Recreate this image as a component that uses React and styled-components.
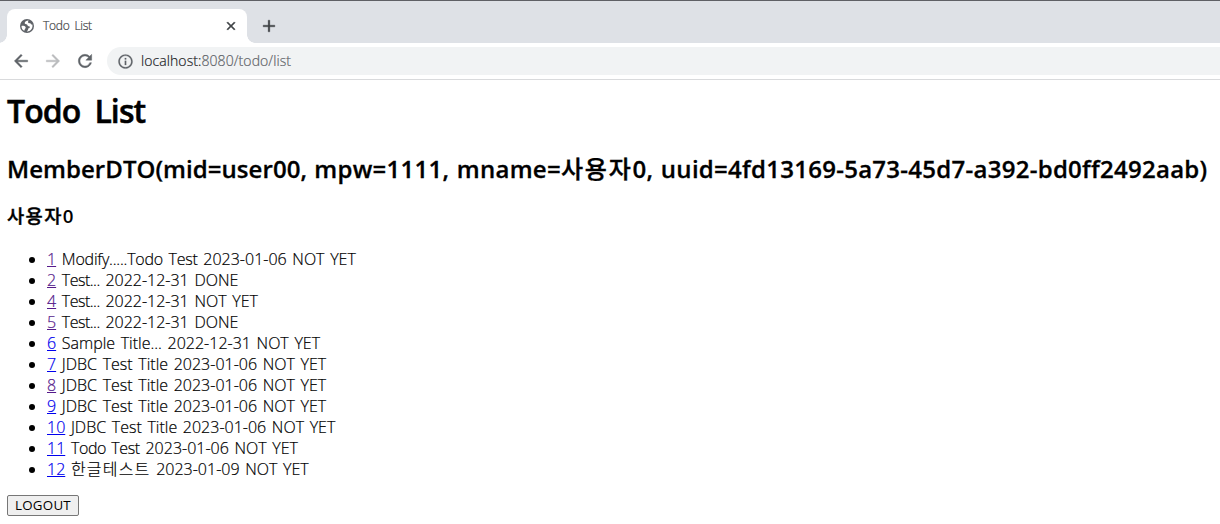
import React from 'react'
import styled, { createGlobalStyle } from 'styled-components'
import { MdArrowBack, MdArrowForward, MdRefresh, MdInfoOutline, MdClose, MdAdd } from 'react-icons/md'

const todos = [
    { tno: 1, title: 'Modify.....Todo Test', dueDate: '2023-01-06', finished: false, visited: true, tracking: -0.2 },
    { tno: 2, title: 'Test...', dueDate: '2022-12-31', finished: true, visited: true, tracking: -0.5 },
    { tno: 4, title: 'Test...', dueDate: '2022-12-31', finished: false, visited: true, tracking: -0.5 },
    { tno: 5, title: 'Test...', dueDate: '2022-12-31', finished: true, visited: true, tracking: -0.5 },
    { tno: 6, title: 'Sample Title...', dueDate: '2022-12-31', finished: false },
    { tno: 7, title: 'JDBC Test Title', dueDate: '2023-01-06', finished: false },
    { tno: 8, title: 'JDBC Test Title', dueDate: '2023-01-06', finished: false, visited: true },
    { tno: 9, title: 'JDBC Test Title', dueDate: '2023-01-06', finished: false },
    { tno: 10, title: 'JDBC Test Title', dueDate: '2023-01-06', finished: false },
    { tno: 11, title: 'Todo Test', dueDate: '2023-01-06', finished: false, tracking: -0.38 },
    { tno: 12, title: '한글테스트', dueDate: '2023-01-09', finished: false, tracking: 1.2 },
]

function GlobeIcon() {
    return (
        <svg width="14" height="14" viewBox="0 0 14 14">
            <circle cx="7" cy="7" r="7" fill="#5f6368" />
            <path d="M8.6 1.6C6.6 1.5 4.8 2.6 4.7 4.1C4.7 5.3 6 5.4 7.1 5.5C7.5 6.8 8.2 7.4 9.7 7.4C10.2 8.6 9.2 9.2 8.2 9.4C8.3 10.7 7.6 11.5 6.8 12.4C9.9 12.7 12.5 10.2 12.5 7C12.5 6.5 12.4 6 12.3 5.6C11.2 5.7 10.5 5.1 10.3 4.1C9.1 4.3 8.2 4.1 8.1 3.2C8 2.5 8.2 2 8.6 1.6Z" fill="#fff" />
            <path d="M1.5 6.9C2.8 6.8 4.8 6.8 5.5 8C6.1 9 5.2 9.7 4.8 10.1C4.8 10.9 4.6 11.5 4.2 11.8C2.5 10.9 1.4 9.2 1.5 6.9Z" fill="#fff" />
        </svg>
    )
}

function App() {
    return (
        <>
            <GlobalStyle />
            <BrowserStyled>
                <TabStrip>
                    <Tab>
                        <GlobeIcon />
                        <TabTitle>Todo List</TabTitle>
                        <IconBox $weight={1}><MdClose size={14} /></IconBox>
                    </Tab>
                    <NewTab>
                        <IconBox $weight={0.4}><MdAdd size={20} /></IconBox>
                    </NewTab>
                </TabStrip>
                <Toolbar>
                    <IconBox $weight={0.5}><MdArrowBack size={20} /></IconBox>
                    <IconBox $weight={0.5} $disabled><MdArrowForward size={20} /></IconBox>
                    <IconBox $weight={0.5}><MdRefresh size={20} /></IconBox>
                    <AddressBar>
                        <IconBox $weight={0.3}><MdInfoOutline size={17} /></IconBox>
                        <Url><b>localhost:</b>8080/todo/list</Url>
                    </AddressBar>
                </Toolbar>
                <Page>
                    <Title>Todo List</Title>
                    <Member>
                        MemberDTO(mid=user00, <Fields>mpw=1111, mname=<Hangul>사용자</Hangul>0, uuid=4fd13169-5a73-45d7-a392-bd0ff2492aab)</Fields>
                    </Member>
                    <MemberName><Hangul>사용자</Hangul>0</MemberName>
                    <TodoList>
                        {todos.map((todo) => (
                            <li key={todo.tno}>
                                <TodoLink href="#" $visited={todo.visited}>{todo.tno}</TodoLink>{' '}
                                <TodoTitle $tracking={todo.tracking}>{todo.title}</TodoTitle>
                                {` ${todo.dueDate} ${todo.finished ? 'DONE' : 'NOT YET'}`}
                            </li>
                        ))}
                    </TodoList>
                    <LogoutButton>LOGOUT</LogoutButton>
                </Page>
            </BrowserStyled>
        </>
    )
}

const GlobalStyle = createGlobalStyle`
    body {
        margin: 0;
        background: #fff;
        color: #000;
        font-family: 'Open Sans', 'Noto Sans CJK KR', sans-serif;
    }
`;

const BrowserStyled = styled.div`
    height: 524px;
    overflow: hidden;
`;

const IconBox = styled.span`
    display: flex;
    color: ${(props) => (props.$disabled ? '#babcbe' : 'inherit')};

    path:not([fill='none']) {
        stroke: currentColor;
        stroke-width: ${(props) => props.$weight}px;
    }
`;

const TabStrip = styled.div`
    display: flex;
    align-items: flex-end;
    box-sizing: border-box;
    height: 43px;
    padding-left: 7px;
    background: #dee1e6;
    border-top: 1px solid #5f6065;
`;

const Tab = styled.div`
    position: relative;
    display: flex;
    align-items: center;
    box-sizing: border-box;
    width: 240px;
    height: 34px;
    padding: 0 9px 0 13px;
    color: #3c4043;
    background: #fff;
    border-radius: 8px 8px 0 0;

    &::before,
    &::after {
        content: '';
        position: absolute;
        bottom: 0;
        width: 8px;
        height: 8px;
    }
    &::before {
        left: -8px;
        background: radial-gradient(circle at 0 0, transparent 7.5px, #fff 8px);
    }
    &::after {
        right: -8px;
        background: radial-gradient(circle at 100% 0, transparent 7.5px, #fff 8px);
    }
`;

const TabTitle = styled.span`
    flex: 1;
    margin-left: 9px;
    font-size: 12px;
    font-weight: 300;
    line-height: 16px;
    letter-spacing: -0.25px;
    word-spacing: 2px;
    -webkit-text-stroke: 0.2px;
`;

const NewTab = styled.div`
    display: flex;
    align-items: center;
    height: 34px;
    margin-left: 12px;
    color: #3c4043;
`;

const Toolbar = styled.div`
    display: flex;
    align-items: center;
    gap: 12px;
    box-sizing: border-box;
    height: 37px;
    padding-left: 11px;
    color: #5f6368;
    border-bottom: 1px solid #d9dadc;
`;

const AddressBar = styled.div`
    display: flex;
    flex: 1;
    align-items: center;
    height: 28px;
    padding-left: 10px;
    background: #f1f3f4;
    border-radius: 14px 0 0 14px;
`;

const Url = styled.span`
    margin-left: 7px;
    font-size: 14px;
    font-weight: 300;
    line-height: 20px;
    letter-spacing: 0.08px;
    -webkit-text-stroke: 0.2px;
    b {
        font-weight: 300;
        color: #202124;
    }
`;

const Page = styled.div`
    padding: 9px 7px 0;
`;

const Title = styled.h1`
    margin: 0 0 21px;
    font-size: 32px;
    font-weight: 600;
    line-height: 43px;
    letter-spacing: -0.9px;
    word-spacing: 6.5px;
    -webkit-text-stroke: 0.5px;
`;

const Member = styled.h2`
    margin: 0 0 18px;
    font-size: 24px;
    font-weight: 600;
    line-height: 32px;
    letter-spacing: 0.05px;
    word-spacing: 1px;
    white-space: nowrap;
    -webkit-text-stroke: 0.3px;
`;

const Fields = styled.span`
    letter-spacing: 0.27px;
`;

const MemberName = styled.h3`
    margin: 0 0 21px;
    font-size: 18.72px;
    font-weight: 600;
    line-height: 25px;
`;

const Hangul = styled.span`
    font-weight: 500;
    letter-spacing: 0.075em;
    -webkit-text-stroke: 0.4px;
`;

const TodoList = styled.ul`
    margin: 0 0 15px;
    padding-left: 40px;
    font-size: 16px;
    font-weight: 300;
    line-height: 21px;
    word-spacing: 1.5px;
    -webkit-text-stroke: 0.2px;
`;

const TodoLink = styled.a`
    color: ${(props) => (props.$visited ? '#551a8b' : '#0000ee')};
    text-decoration: underline;
`;

const TodoTitle = styled.span`
    letter-spacing: ${(props) => props.$tracking || 0}px;
`;

const LogoutButton = styled.button`
    display: block;
    width: 72px;
    height: 21px;
    padding: 0;
    font-family: inherit;
    font-size: 13.333px;
    line-height: 17px;
    letter-spacing: 0.25px;
    color: #000;
    background: #efefef;
    border: 1px solid #767676;
    border-radius: 2px;
`;

export default App;
